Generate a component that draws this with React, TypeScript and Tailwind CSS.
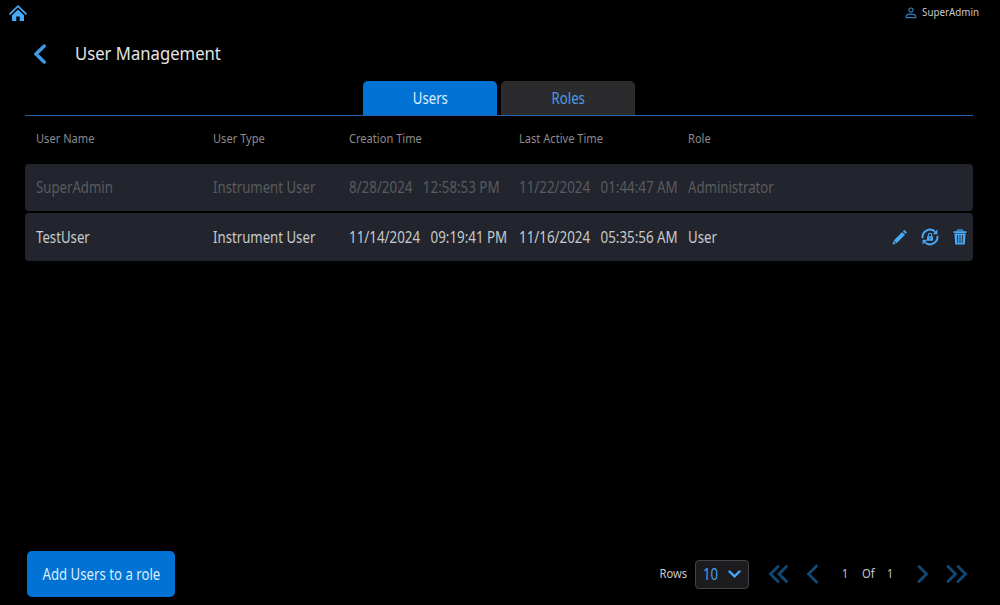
import type { ReactNode } from 'react'

interface User {
  id: number
  name: string
  type: string
  created: [string, string]
  lastActive: [string, string]
  role: string
  locked: boolean
}

const USERS: User[] = [
  {
    id: 1,
    name: 'SuperAdmin',
    type: 'Instrument User',
    created: ['8/28/2024', '12:58:53 PM'],
    lastActive: ['11/22/2024', '01:44:47 AM'],
    role: 'Administrator',
    locked: true,
  },
  {
    id: 2,
    name: 'TestUser',
    type: 'Instrument User',
    created: ['11/14/2024', '09:19:41 PM'],
    lastActive: ['11/16/2024', '05:35:56 AM'],
    role: 'User',
    locked: false,
  },
]

const COLUMNS = ['User Name', 'User Type', 'Creation Time', 'Last Active Time', 'Role']

const GRID = 'grid grid-cols-[177px_136px_169.5px_169px_1fr] items-center pl-[11px]'

// Narrows the text a little, the panel font is slightly condensed
function Label({ children, className = 'origin-left scale-x-[0.825]' }: { children: ReactNode; className?: string }) {
  return <span className={`inline-block whitespace-pre ${className}`}>{children}</span>
}

function HomeIcon() {
  return (
    <svg width="18" height="16" viewBox="0 0 18 16" fill="none">
      <path d="M1 8.8 9 1.2l8 7.6" stroke="#48a9f8" strokeWidth="1.7" strokeLinecap="round" />
      <path d="M9 4.6 15 10.2V16h-4.3v-4.5H7.3V16H3v-5.8z" fill="#48a9f8" />
    </svg>
  )
}

function UserIcon() {
  return (
    <svg width="12" height="12" viewBox="0 0 12 12" fill="none" stroke="#2f7dbb" strokeWidth="1.2">
      <circle cx="6" cy="3.1" r="2.1" />
      <path d="M1.2 10.6V9.4c0-1.4 2.2-2.2 4.8-2.2s4.8.8 4.8 2.2v1.2z" />
    </svg>
  )
}

function PencilIcon() {
  return (
    <svg width="15" height="15" viewBox="0 0 15 15" fill="#48a9f8">
      <path d="M.6 14.4l.8-3.4 2.6 2.6z" />
      <path d="M1.8 10.4 10.2 2l2.8 2.8-8.4 8.4z" />
      <path d="M10.9 1.3 11.7.6c.4-.4 1-.4 1.4 0L14.4 1.9c.4.4.4 1 0 1.4l-.7.8z" />
    </svg>
  )
}

function ResetIcon() {
  return (
    <svg width="18" height="18" viewBox="0 0 18 18" fill="none" stroke="#48a9f8">
      <path d="M1.6 10.2A7.5 7.5 0 0 1 14 3.6" strokeWidth="1.9" />
      <path d="M16.4 7.8A7.5 7.5 0 0 1 4 14.4" strokeWidth="1.9" />
      <path d="M16.4 1.4v4.8h-4.8zM1.6 16.6v-4.8h4.8z" fill="#48a9f8" stroke="none" />
      <rect x="6" y="8.2" width="6" height="4.6" rx=".6" fill="#48a9f8" stroke="none" />
      <path d="M7.3 8.4V7a1.7 1.7 0 0 1 3.4 0v1.4" strokeWidth="1.1" />
      <circle cx="9" cy="10.5" r=".7" fill="#22252d" stroke="none" />
    </svg>
  )
}

function TrashIcon() {
  return (
    <svg width="14" height="16" viewBox="0 0 14 16" fill="none" stroke="#48a9f8">
      <path d="M.6 3.1h12.8" strokeWidth="1.8" />
      <path d="M4.7 2.6V1h4.6v1.6" strokeWidth="1.2" />
      <path d="M1.4 4.4h11.2l-.8 11.2H2.2z" fill="#48a9f8" stroke="none" />
      <path d="M4.5 6l.3 8M7 6v8M9.5 6l-.3 8" stroke="#22252d" strokeWidth=".9" />
    </svg>
  )
}

function Tab({ label, active }: { label: string; active?: boolean }) {
  return (
    <button
      className={`h-[34px] w-[134px] rounded-t-[5px] text-base ${
        active ? 'bg-[#0273d4] text-[#d9edff]' : 'bg-[#2b2b2d] text-[#4a9ce8]'
      }`}
    >
      <Label className="origin-center scale-x-[0.825]">{label}</Label>
    </button>
  )
}

function Time({ value }: { value: [string, string] }) {
  return (
    <Label className="origin-left scale-x-[0.835]">
      {value[0]}
      <span className="ml-[12.5px]">{value[1]}</span>
    </Label>
  )
}

function Chevron({ points, w = 12 }: { points: string[]; w?: number }) {
  return (
    <svg width={w} height="20" viewBox={`0 0 ${w} 20`} fill="none" stroke="#114873" strokeWidth="2.9" strokeLinecap="round">
      {points.map(d => (
        <path key={d} d={d} />
      ))}
    </svg>
  )
}

export default function App() {
  return (
    <div className="flex h-[605px] w-[1000px] flex-col overflow-hidden bg-black font-['Noto_Sans',sans-serif] text-[#c8c9cc]">
      {/* Top bar */}
      <header className="flex h-[25px] items-center justify-between pl-[9px] pr-[21px]">
        <HomeIcon />
        <div className="flex items-center text-[11px]">
          <UserIcon />
          <Label className="-ml-[2px] origin-right scale-x-[0.89]">SuperAdmin</Label>
        </div>
      </header>

      {/* Title */}
      <div className="flex h-[57px] items-center pl-[34px]">
        <svg width="12" height="20" viewBox="0 0 12 20" fill="none">
          <path d="M10.2 2 2 10l8.2 8" stroke="#3d9bea" strokeWidth="3.4" strokeLinecap="round" />
        </svg>
        <h1 className="ml-[29px] text-[18px] text-[#e4e4e4]">
          <Label className="origin-left scale-x-[0.926]">User Management</Label>
        </h1>
      </div>

      {/* Tabs */}
      <div className="-mt-px ml-[25px] flex w-[948px] justify-center gap-1 border-b border-b-[#2463a6]">
        <Tab label="Users" active />
        <Tab label="Roles" />
      </div>

      {/* Table */}
      <main className="ml-[25px] w-[948px] flex-1">
        <div className={`${GRID} h-[47.5px] pb-[2px] text-[13px] text-[#8b8b8d]`}>
          {COLUMNS.map(c => (
            <Label key={c} className="origin-left scale-x-[0.853]">{c}</Label>
          ))}
        </div>
        <div className="flex flex-col gap-[2px]">
          {USERS.map(u => (
            <div
              key={u.id}
              className={`${GRID} h-[47.8px] rounded-[4px] bg-[#22252d] text-base ${u.locked ? 'text-[#5a5b5f]' : ''}`}
            >
              <Label>{u.name}</Label>
              <Label>{u.type}</Label>
              <Time value={u.created} />
              <Time value={u.lastActive} />
              <div className="flex items-center justify-between pr-[6px]">
                <Label>{u.role}</Label>
                {!u.locked && (
                  <div className="flex items-center gap-[14px]">
                    <PencilIcon />
                    <ResetIcon />
                    <TrashIcon />
                  </div>
                )}
              </div>
            </div>
          ))}
        </div>
      </main>

      {/* Footer */}
      <footer className="flex h-[62px] items-center pl-[27px] pr-[32px]">
        <button className="h-[46px] w-[148px] rounded-[5px] bg-[#0273d4] text-base text-[#d9edff]">
          <Label className="origin-center scale-x-[0.825]">Add Users to a role</Label>
        </button>
        <div className="ml-auto flex items-center text-[13px]">
          <Label className="origin-right scale-x-[0.86]">Rows</Label>
          <div className="ml-2 flex h-[29px] w-[54px] items-center justify-between rounded-[4px] border border-[#444446] bg-[#1c1c1e] pl-[7px] pr-[7px] text-base text-[#48a0ee]">
            <Label>10</Label>
            <svg width="13" height="8" viewBox="0 0 13 8" fill="none">
              <path d="M1.5 1.5 6.5 6.3l5-4.8" stroke="#48a9f8" strokeWidth="2.4" strokeLinecap="round" />
            </svg>
          </div>
          <div className="ml-[19px] flex items-center">
            <Chevron w={20} points={['M10 2.5 2.5 10l7.5 7.5', 'M18.5 2.5 11 10l7.5 7.5']} />
            <span className="ml-[18px] flex">
              <Chevron points={['M10.5 2 2.5 10l8 8']} />
            </span>
            <span className="ml-6 flex w-[52px] justify-between">
              <Label>1</Label>
              <Label className="scale-x-[0.86]">Of</Label>
              <Label>1</Label>
            </span>
            <span className="ml-[23px] flex">
              <Chevron points={['M2 2.5 9.5 10 2 17.5']} />
            </span>
            <span className="ml-[17px] flex">
              <Chevron w={22} points={['M2 2.5 9.5 10 2 17.5', 'M12 2.5l7.5 7.5-7.5 7.5']} />
            </span>
          </div>
        </div>
      </footer>
    </div>
  )
}
